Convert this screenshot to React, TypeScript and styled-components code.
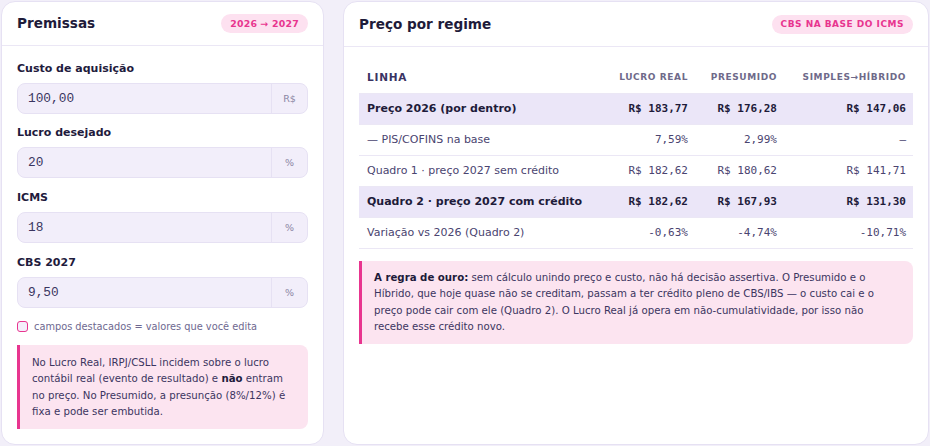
import styled, { createGlobalStyle } from 'styled-components';

const GlobalStyle = createGlobalStyle`
  html, body {
    margin: 0;
    padding: 0;
    background: #f2eff9;
    font-family: "DejaVu Sans", Verdana, sans-serif;
    color: #1e1b3a;
  }
  * { box-sizing: border-box; }
`;

const Page = styled.div`
  display: grid;
  grid-template-columns: 323px 586px;
  gap: 19px;
  padding: 1px 1px 1px 1px;
  height: 446px;
`;

const Card = styled.section`
  background: #ffffff;
  border: 1px solid #e6e1f3;
  border-radius: 14px;
  display: flex;
  flex-direction: column;
  overflow: hidden;
`;

const CardHeader = styled.header`
  display: flex;
  align-items: center;
  justify-content: space-between;
  height: 45px;
  padding: 0 15px 0 15px;
  border-bottom: 1px solid #ebe7f5;
`;

const Title = styled.h2`
  margin: 0;
  font-size: 13.6px;
  font-weight: 700;
  color: #1e1b3a;
`;

const Badge = styled.span<{ $spaced?: boolean }>`
  display: inline-flex;
  align-items: center;
  height: 19px;
  padding: 0 9px;
  border-radius: 10px;
  background: #fde1f0;
  color: #e8358f;
  font-size: ${(p) => (p.$spaced ? '9px' : '9.4px')};
  font-weight: 700;
  letter-spacing: ${(p) => (p.$spaced ? '0.5px' : '0.2px')};
`;

const Body = styled.div<{ $top: number }>`
  padding: ${(p) => p.$top}px 15px 15px 15px;
  display: flex;
  flex-direction: column;
`;

const Field = styled.div`
  display: flex;
  flex-direction: column;
  gap: 7px;
  margin-bottom: 12.7px;
`;

const Label = styled.label`
  font-size: 11px;
  font-weight: 700;
  line-height: 14px;
  color: #1f1b3d;
`;

const InputWrap = styled.div`
  display: flex;
  height: 31px;
  border: 1px solid #e6e1f3;
  border-radius: 8px;
  background: #f2eefa;
  overflow: hidden;
`;

const Input = styled.input`
  flex: 1;
  min-width: 0;
  border: none;
  background: transparent;
  padding: 0 10px;
  font-family: "Liberation Mono", monospace;
  font-size: 12.8px;
  color: #3a3560;
  outline: none;
`;

const Suffix = styled.span`
  width: 36px;
  display: flex;
  align-items: center;
  justify-content: center;
  border-left: 1px solid #e6e1f3;
  font-size: 9.5px;
  color: #8a85a3;
`;

const Legend = styled.div`
  display: flex;
  align-items: center;
  gap: 6px;
  margin-top: 1px;
  font-size: 9.8px;
  color: #6e6890;
`;

const Swatch = styled.span`
  width: 11px;
  height: 11px;
  border: 1.5px solid #e8358f;
  border-radius: 3px;
  background: #f4effb;
`;

const Note = styled.div<{ $mt: number }>`
  margin-top: ${(p) => p.$mt}px;
  background: #fce4f0;
  border-left: 3px solid #e8358f;
  border-radius: 0 8px 8px 0;
  padding: 9.5px 12px 8.5px 12px;
  font-size: 10.2px;
  line-height: 16.4px;
  color: #3b3560;

  b {
    color: #1e1b3a;
  }
`;

const Table = styled.table`
  width: 100%;
  border-collapse: collapse;
`;

const Th = styled.th<{ $first?: boolean }>`
  height: 32px;
  padding: 0 7px 0 8px;
  text-align: ${(p) => (p.$first ? 'left' : 'right')};
  font-size: ${(p) => (p.$first ? '10.5px' : '9px')};
  font-weight: 700;
  letter-spacing: ${(p) => (p.$first ? '0.8px' : '0.6px')};
  color: ${(p) => (p.$first ? '#3a3363' : '#6f6a8a')};
  border-bottom: 1px solid #ebe7f5;
  white-space: nowrap;
`;

const Tr = styled.tr<{ $strong?: boolean }>`
  background: ${(p) => (p.$strong ? '#ebe6f8' : 'transparent')};
  font-weight: ${(p) => (p.$strong ? 700 : 400)};
  color: ${(p) => (p.$strong ? '#1e1b3a' : '#4a4470')};
`;

const Td = styled.td`
  height: 31px;
  padding: 0 7px 0 8px;
  border-bottom: 1px solid #ebe7f5;
  font-size: 11px;
  white-space: nowrap;
`;

const Num = styled(Td)`
  text-align: right;
  font-family: "DejaVu Sans Mono", monospace;
  font-size: 11px;
`;

const fields = [
  { label: 'Custo de aquisição', value: '100,00', unit: 'R$' },
  { label: 'Lucro desejado', value: '20', unit: '%' },
  { label: 'ICMS', value: '18', unit: '%' },
  { label: 'CBS 2027', value: '9,50', unit: '%' },
];

const rows = [
  { name: 'Preço 2026 (por dentro)', vals: ['R$ 183,77', 'R$ 176,28', 'R$ 147,06'], strong: true },
  { name: '— PIS/COFINS na base', vals: ['7,59%', '2,99%', '–'] },
  { name: 'Quadro 1 · preço 2027 sem crédito', vals: ['R$ 182,62', 'R$ 180,62', 'R$ 141,71'] },
  { name: 'Quadro 2 · preço 2027 com crédito', vals: ['R$ 182,62', 'R$ 167,93', 'R$ 131,30'], strong: true },
  { name: 'Variação vs 2026 (Quadro 2)', vals: ['-0,63%', '-4,74%', '-10,71%'] },
];

const App = () => (
  <>
    <GlobalStyle />
    <Page>
      <Card>
        <CardHeader>
          <Title>Premissas</Title>
          <Badge>2026 → 2027</Badge>
        </CardHeader>
        <Body $top={16}>
          {fields.map((f) => (
            <Field key={f.label}>
              <Label>{f.label}</Label>
              <InputWrap>
                <Input defaultValue={f.value} />
                <Suffix>{f.unit}</Suffix>
              </InputWrap>
            </Field>
          ))}
          <Legend>
            <Swatch />
            campos destacados = valores que você edita
          </Legend>
          <Note $mt={13}>
            No Lucro Real, IRPJ/CSLL incidem sobre o lucro contábil real (evento de resultado) e{' '}
            <b>não</b> entram no preço. No Presumido, a presunção (8%/12%) é fixa e pode ser
            embutida.
          </Note>
        </Body>
      </Card>
      <Card>
        <CardHeader>
          <Title>Preço por regime</Title>
          <Badge $spaced>CBS NA BASE DO ICMS</Badge>
        </CardHeader>
        <Body $top={14}>
          <Table>
            <colgroup>
              <col />
              <col style={{ width: 100 }} />
              <col style={{ width: 89 }} />
              <col style={{ width: 129 }} />
            </colgroup>
            <thead>
              <tr>
                <Th $first>LINHA</Th>
                <Th>LUCRO REAL</Th>
                <Th>PRESUMIDO</Th>
                <Th>SIMPLES→HÍBRIDO</Th>
              </tr>
            </thead>
            <tbody>
              {rows.map((r) => (
                <Tr key={r.name} $strong={r.strong}>
                  <Td>{r.name}</Td>
                  {r.vals.map((v, i) => (
                    <Num key={i}>{v}</Num>
                  ))}
                </Tr>
              ))}
            </tbody>
          </Table>
          <Note $mt={12}>
            <b>A regra de ouro:</b> sem cálculo unindo preço e custo, não há decisão assertiva. O
            Presumido e o Híbrido, que hoje quase não se creditam, passam a ter crédito pleno de
            CBS/IBS — o custo cai e o preço pode cair com ele (Quadro 2). O Lucro Real já opera em
            não-cumulatividade, por isso não recebe esse crédito novo.
          </Note>
        </Body>
      </Card>
    </Page>
  </>
);

export default App;
